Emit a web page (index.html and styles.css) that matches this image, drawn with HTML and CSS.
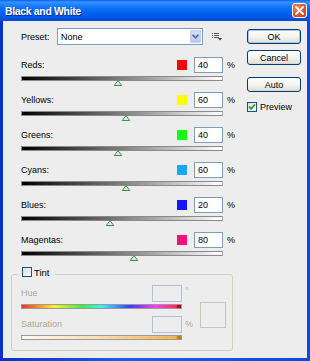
FILE: index.html
```html
<!DOCTYPE html>
<html lang="en">

<head>
  <meta charset="UTF-8">
  <title>Black and White</title>
  <link rel="stylesheet" href="styles.css">
</head>

<body>
  <div class="window">
    <div class="titlebar">
      <span class="title">Black and White</span>
      <button class="close-btn" aria-label="Close">
        <svg width="9" height="9" viewBox="0 0 9 9">
          <path d="M1 1 L8 8 M8 1 L1 8" stroke="#fff" stroke-width="1.8" stroke-linecap="square" />
        </svg>
      </button>
    </div>

    <div class="client">
      <div class="main">
        <div class="preset-row">
          <span class="preset-label">Preset:</span>
          <div class="select">
            <span class="select-text">None</span>
            <span class="select-arrow">
              <svg width="7" height="5" viewBox="0 0 7 5">
                <path d="M0.5 0.8 L3.5 3.8 L6.5 0.8" fill="none" stroke="#4d6185" stroke-width="1.5" />
              </svg>
            </span>
          </div>
          <span class="preset-menu">
            <svg width="11" height="8" viewBox="0 0 11 8">
              <rect x="0" y="0" width="1" height="1" fill="#555" />
              <rect x="2" y="0" width="5" height="1" fill="#555" />
              <rect x="0" y="2" width="1" height="1" fill="#555" />
              <rect x="2" y="2" width="5" height="1" fill="#555" />
              <rect x="0" y="4" width="1" height="1" fill="#555" />
              <rect x="2" y="4" width="5" height="1" fill="#555" />
              <path d="M6 5 H10 L8 7.5 Z" fill="#333" />
            </svg>
          </span>
        </div>

        <div class="channels">
          <div class="channel">
            <div class="channel-head">
              <span class="channel-name">Reds:</span>
              <span class="swatch swatch-red"></span>
              <input class="num" type="text" value="40">
              <span class="unit">%</span>
            </div>
            <div class="track track-gray">
              <span class="thumb" style="left: 48%"><svg width="9" height="6" viewBox="0 0 9 6"><path d="M4.5 0.7 L8.3 5.5 H0.7 Z" fill="#dcefdf" stroke="#3f8a50" /></svg></span>
            </div>
          </div>

          <div class="channel">
            <div class="channel-head">
              <span class="channel-name">Yellows:</span>
              <span class="swatch swatch-yellow"></span>
              <input class="num" type="text" value="60">
              <span class="unit">%</span>
            </div>
            <div class="track track-gray">
              <span class="thumb" style="left: 52%"><svg width="9" height="6" viewBox="0 0 9 6"><path d="M4.5 0.7 L8.3 5.5 H0.7 Z" fill="#dcefdf" stroke="#3f8a50" /></svg></span>
            </div>
          </div>

          <div class="channel">
            <div class="channel-head">
              <span class="channel-name">Greens:</span>
              <span class="swatch swatch-green"></span>
              <input class="num" type="text" value="40">
              <span class="unit">%</span>
            </div>
            <div class="track track-gray">
              <span class="thumb" style="left: 48%"><svg width="9" height="6" viewBox="0 0 9 6"><path d="M4.5 0.7 L8.3 5.5 H0.7 Z" fill="#dcefdf" stroke="#3f8a50" /></svg></span>
            </div>
          </div>

          <div class="channel">
            <div class="channel-head">
              <span class="channel-name">Cyans:</span>
              <span class="swatch swatch-cyan"></span>
              <input class="num" type="text" value="60">
              <span class="unit">%</span>
            </div>
            <div class="track track-gray">
              <span class="thumb" style="left: 52%"><svg width="9" height="6" viewBox="0 0 9 6"><path d="M4.5 0.7 L8.3 5.5 H0.7 Z" fill="#dcefdf" stroke="#3f8a50" /></svg></span>
            </div>
          </div>

          <div class="channel">
            <div class="channel-head">
              <span class="channel-name">Blues:</span>
              <span class="swatch swatch-blue"></span>
              <input class="num" type="text" value="20">
              <span class="unit">%</span>
            </div>
            <div class="track track-gray">
              <span class="thumb" style="left: 44%"><svg width="9" height="6" viewBox="0 0 9 6"><path d="M4.5 0.7 L8.3 5.5 H0.7 Z" fill="#dcefdf" stroke="#3f8a50" /></svg></span>
            </div>
          </div>

          <div class="channel">
            <div class="channel-head">
              <span class="channel-name">Magentas:</span>
              <span class="swatch swatch-magenta"></span>
              <input class="num" type="text" value="80">
              <span class="unit">%</span>
            </div>
            <div class="track track-gray">
              <span class="thumb" style="left: 56%"><svg width="9" height="6" viewBox="0 0 9 6"><path d="M4.5 0.7 L8.3 5.5 H0.7 Z" fill="#dcefdf" stroke="#3f8a50" /></svg></span>
            </div>
          </div>
        </div>

        <fieldset class="tint">
          <legend class="tint-legend">
            <span class="check"></span>
            <span class="tint-label">Tint</span>
          </legend>
          <div class="tint-body">
            <div class="tint-fields">
              <div class="tint-head">
                <span class="tint-name">Hue</span>
                <input class="num num-disabled" type="text" value="" disabled>
                <span class="unit unit-disabled">°</span>
              </div>
              <div class="track track-hue"></div>

              <div class="tint-head tint-head-sat">
                <span class="tint-name">Saturation</span>
                <input class="num num-disabled" type="text" value="" disabled>
                <span class="unit unit-disabled">%</span>
              </div>
              <div class="track track-sat"></div>
            </div>
            <div class="tint-swatch"></div>
          </div>
        </fieldset>
      </div>

      <div class="actions">
        <button class="btn btn-default">OK</button>
        <button class="btn">Cancel</button>
        <button class="btn btn-auto">Auto</button>
        <label class="preview">
          <span class="check check-on">
            <svg width="8" height="8" viewBox="0 0 8 8">
              <path d="M1 3.5 L3 5.8 L7 1.5" fill="none" stroke="#21a121" stroke-width="1.8" />
            </svg>
          </span>
          Preview
        </label>
      </div>
    </div>
  </div>
</body>

</html>
```

FILE: styles.css
```css
* {
  margin: 0;
  padding: 0;
  box-sizing: border-box;
}

html,
body {
  width: 310px;
  height: 361px;
  overflow: hidden;
}

body {
  font-family: 'Liberation Sans', Arial, sans-serif;
  font-size: 9px;
  color: #000;
  background: #0a4bdc;
}

.window {
  width: 310px;
  height: 361px;
  display: flex;
  flex-direction: column;
  background: linear-gradient(to right, #0831c8, #1660ea 40%, #0a4bdc);
}

/* title bar */
.titlebar {
  height: 21px;
  flex-shrink: 0;
  display: flex;
  align-items: center;
  justify-content: space-between;
  padding: 0 3px 0 5px;
  background: linear-gradient(to bottom,
      #0a5ff0 0%,
      #3a93ff 10%,
      #2485ff 20%,
      #0c6ff8 40%,
      #0060ee 65%,
      #0056e2 85%,
      #0048d2 100%);
}

.title {
  color: #fff;
  font-weight: bold;
  font-size: 10.5px;
  letter-spacing: -0.35px;
  text-shadow: 1px 1px 0 #0b2f8f;
  margin-top: 1px;
}

.close-btn {
  width: 15px;
  height: 15px;
  border: 1px solid #fff;
  border-radius: 3px;
  background: radial-gradient(circle at 35% 30%, #f08a62, #d9532a 60%, #c23f16);
  display: flex;
  align-items: center;
  justify-content: center;
}

/* dialog body */
.client {
  flex: 1;
  margin: 0 3px 3px;
  background: #ededed;
  display: flex;
  padding-left: 8px;
}

.main {
  width: 236px;
}

.preset-row {
  display: flex;
  align-items: center;
  height: 17px;
  margin: 7px 0 0 10px;
}

.preset-label {
  width: 36px;
}

.select {
  width: 146px;
  height: 17px;
  border: 1px solid #7f9db9;
  background: #fff;
  display: flex;
  align-items: center;
  justify-content: space-between;
  padding: 1px 1px 1px 3px;
}

.select-arrow {
  width: 11px;
  height: 13px;
  border-radius: 1px;
  background: linear-gradient(to bottom, #d3def8, #b6c8f2);
  border: 1px solid #c3d1f3;
  display: flex;
  align-items: center;
  justify-content: center;
}

.preset-menu {
  margin-left: 9px;
  display: flex;
}

.channels {
  margin: 12px 0 0 10px;
}

.channel {
  height: 35px;
}

.channel-head {
  display: flex;
  align-items: center;
  height: 16px;
}

.channel-name {
  width: 156px;
}

.swatch {
  width: 10px;
  height: 10px;
  margin-right: 7px;
}

.swatch-red {
  background: #ff0000;
}

.swatch-yellow {
  background: #ffff00;
}

.swatch-green {
  background: #1cf51c;
}

.swatch-cyan {
  background: #1ea6f3;
}

.swatch-blue {
  background: #1616fa;
}

.swatch-magenta {
  background: #f3127c;
}

.num {
  width: 29px;
  height: 16px;
  border: 1px solid #7f9db9;
  background: #fff;
  font-family: 'Liberation Sans', Arial, sans-serif;
  font-size: 9px;
  color: #000;
  padding: 0 0 0 3px;
  outline: none;
}

.unit {
  margin-left: 4px;
}

/* slider tracks */
.track {
  position: relative;
  width: 202px;
  height: 5px;
  margin-top: 3px;
  border: 1px solid #8a8a8a;
  border-right-color: #b4b4b4;
}

.track-gray {
  background: linear-gradient(to right, #000, #fff);
}

.thumb {
  position: absolute;
  top: 3px;
  transform: translateX(-50%);
  display: flex;
}

/* tint group */
.tint {
  width: 222px;
  border: 1px solid #d0d0bf;
  border-radius: 3px;
  padding: 3px 5px 10px 9px;
}

.tint-legend {
  display: flex;
  align-items: flex-start;
  height: 15px;
  margin-left: -3px;
  padding: 0 6px 0 4px;
}

.check {
  width: 10px;
  height: 10px;
  border: 1px solid #1c5180;
  background: linear-gradient(135deg, #dcdcd7, #fff);
  display: flex;
  align-items: center;
  justify-content: center;
}

.tint-label {
  margin-left: 2px;
  line-height: 11px;
  font-size: 9.5px;
}

.tint-body {
  display: flex;
}

.tint-fields {
  width: 179px;
}

.tint-head {
  display: flex;
  align-items: flex-start;
  height: 17px;
  color: #aca899;
}

.tint-head-sat {
  margin-top: 7px;
}

.tint-name {
  width: 131px;
  line-height: 17px;
}

.num-disabled {
  width: 30px;
  height: 17px;
  border-color: #b2c2d3;
  background: transparent;
}

.unit-disabled {
  margin-left: 3px;
  color: #aca899;
  line-height: 12px;
}

.tint-head-sat .unit-disabled {
  line-height: 17px;
}

.track-hue {
  width: 161px;
  margin-top: 2px;
  border-color: #9a9a9a;
  background: linear-gradient(to right,
      #ff2a2a 0%,
      #ffef2a 20%,
      #3cf03c 38%,
      #3cf2f2 50%,
      #3c3cff 68%,
      #ff3cff 84%,
      #ff2a55 97%,
      #b00000 98%);
}

.track-sat {
  width: 161px;
  margin-top: 2px;
  border-color: #9a9a9a;
  background: linear-gradient(to right, #fffaf2 0%, #fbdcae 50%, #f5b44c 97%, #c07a10 98%);
}

.tint-swatch {
  width: 26px;
  height: 26px;
  margin-top: 17px;
  border: 1px solid #c5c5ba;
}

/* buttons column */
.actions {
  width: 54px;
  padding-top: 8px;
  display: flex;
  flex-direction: column;
}

.btn {
  height: 15px;
  border: 1px solid #003c74;
  border-radius: 3px;
  background: linear-gradient(to bottom, #fff 0%, #f4f4f0 50%, #e3e2dc 90%, #d6d0c5 100%);
  font-family: 'Liberation Sans', Arial, sans-serif;
  font-size: 9px;
  color: #000;
}

.btn-default {
  box-shadow: inset 0 0 0 1px #a9c4ef;
}

.btn + .btn {
  margin-top: 6px;
}

.btn-auto {
  margin-top: 12px !important;
}

.preview {
  display: flex;
  align-items: center;
  margin-top: 10px;
  gap: 3px;
}
```
